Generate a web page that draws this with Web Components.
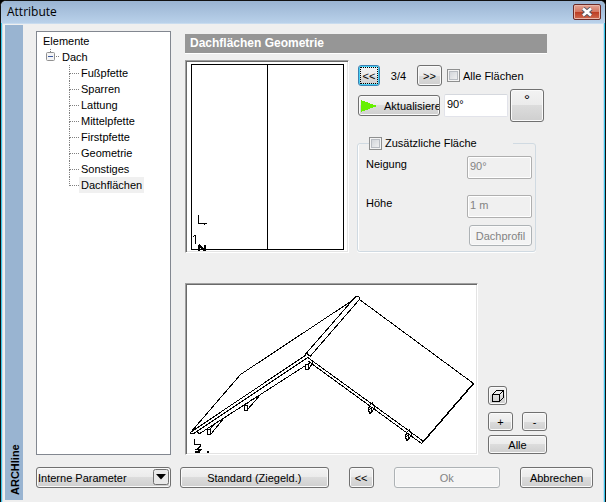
<!DOCTYPE html>
<html lang="de">
<head>
<meta charset="utf-8">
<title>Attribute</title>
<style>
html, body { margin: 0; min-height: 100vh; background: #000; }
body { display: flex; font: 11px/16px "Liberation Sans", Arial, sans-serif; color: #000; }
</style>
</head>
<body>
<attribute-dialog></attribute-dialog>
<script>
function define(name, html, setup) {
  customElements.define(name, class extends HTMLElement {
    constructor() {
      super();
      const root = this.attachShadow({ mode: "open" });
      const t = document.createElement("template");
      t.innerHTML = "<style>*{box-sizing:border-box}button,input,select{font:inherit;color:inherit;margin:0}</style>" + html;
      root.append(t.content.cloneNode(true));
    }
    connectedCallback() { if (setup) setup(this, this.shadowRoot); }
  });
}

define("push-button", `
<style>
:host { display: block; height: 21px; }
button { width: 100%; height: 100%; padding: 0; border: 1px solid #707070; border-radius: 3px; overflow: hidden; white-space: nowrap;
  display: flex; align-items: center; justify-content: center; gap: 7px;
  background: linear-gradient(#f3f3f3, #ebebeb 50%, #dcdcdc 50%, #cfcfcf); box-shadow: inset 0 0 0 1px #fafafa; }
:host([start]) button { justify-content: flex-start; padding-left: 2px; }
:host([top]) button { align-items: flex-start; }
:host([focused]) button { border-color: #3c7fb1; box-shadow: inset 0 0 0 1px #46d0f4; outline: 1px dotted #000; outline-offset: -3px; }
button:disabled { color: #838383; border-color: #adb2b5; background: #f4f4f4; }
</style>
<button type="button"><slot></slot></button>`, (el, root) => {
  const b = root.querySelector("button");
  b.disabled = el.hasAttribute("disabled");
  if (el.hasAttribute("label")) b.setAttribute("aria-label", el.getAttribute("label"));
});

define("text-field", `
<style>
:host { display: grid; grid-template-columns: 1fr 65px; align-items: start; }
:host([bare]) { display: block; }
:host([bare]) label { display: none; }
input { width: 100%; height: 23px; padding: 0 2px 4px; border: 1px solid #e2e3ea; border-top-color: #abadb3; border-radius: 2px; background: #fff; }
:host([bare]) input { border-top-color: #d5d8de; }
input:disabled { color: #838383; background: #f0f0f0; border-color: #afafaf; box-shadow: inset 0 0 0 1px #fff; }
</style>
<label for="f"></label><input id="f" type="text">`, (el, root) => {
  const i = root.querySelector("input");
  i.value = el.getAttribute("value");
  i.disabled = el.hasAttribute("disabled");
  if (el.hasAttribute("bare")) i.setAttribute("aria-label", el.getAttribute("label"));
  else root.querySelector("label").textContent = el.getAttribute("label");
});

define("check-box", `
<style>
:host { display: block; }
label { display: flex; align-items: center; gap: 3px; white-space: nowrap; }
input { appearance: none; width: 13px; height: 13px; border: 1px solid #8e8f8f;
  background: linear-gradient(135deg, #cbcfd5, #f6f6f6); box-shadow: inset 0 0 0 1px #f4f4f4, inset 0 0 0 2px #b8bcc2; }
input:checked { background: #4b6ea5; }
</style>
<label><input type="checkbox"><slot></slot></label>`);

define("drop-down", `
<style>
:host { display: block; position: relative; height: 21px; }
select { appearance: none; width: 100%; height: 100%; padding: 0 20px 0 1px; border: 1px solid #707070; border-radius: 3px;
  background: linear-gradient(#f3f3f3, #ebebeb 50%, #dcdcdc 50%, #cfcfcf); box-shadow: inset 0 0 0 1px #fafafa; }
svg { position: absolute; right: 2px; top: 2px; pointer-events: none; }
</style>
<select aria-label="Parameter"><option>Interne Parameter</option></select>
<svg width="16" height="16"><rect x=".5" y=".5" width="15" height="15" rx="2" fill="#e9e9e9" stroke="#707070"/><path d="M3 5h10L8 10.500z"/></svg>`);

define("element-tree", `
<style>
:host { display: block; background: #fff; border: 1px solid #828790; padding: 1px 0 0 6px; }
ul { list-style: none; margin: 0; padding: 0; }
.root { padding-left: 19px; position: relative; }
.root::before { content: ""; position: absolute; left: 7px; top: 0; height: 3px; border-left: 1px dotted #808080; }
.box { position: absolute; left: 3px; top: 3px; }
.kids { padding-left: 7px; }
.kids li { display: grid; grid-template-columns: 10px max-content; height: 16px; position: relative; }
.kids li::before { content: ""; height: 8px; border-left: 1px dotted #808080; border-bottom: 1px dotted #808080; }
.kids li:not(:last-child)::after { content: ""; position: absolute; left: 0; top: 8px; height: 8px; border-left: 1px dotted #808080; }
span { padding: 0 2px; }
.sel { background: #f0f0f0; }
</style>
<div>Elemente</div>
<div class="root">
<svg class="box" width="14" height="9"><rect x=".5" y=".5" width="8" height="8" rx="1" fill="#f4f4f4" stroke="#919191"/><path d="M2 4.500h5" stroke="#3c5aa0"/><path d="M10 4.500h1m1 0h1" stroke="#808080"/></svg>
Dach
<ul class="kids">
<li><span>Fußpfette</span></li><li><span>Sparren</span></li><li><span>Lattung</span></li><li><span>Mittelpfette</span></li><li><span>Firstpfette</span></li><li><span>Geometrie</span></li><li><span>Sonstiges</span></li><li><span class="sel">Dachflächen</span></li>
</ul></div>`);

define("sunken-view", `
<style>
:host { display: flex; background: #fff; border: 1px solid; border-color: #a0a0a0 #fff #fff #a0a0a0;
  box-shadow: inset 1px 1px #696969, inset -1px -1px #e3e3e3; min-width: 0; overflow: hidden; padding: 1px; }
::slotted(svg) { width: 100%; height: 100%; }
</style><slot></slot>`);

define("title-bar", `
<style>
:host { display: flex; height: 22px; align-items: center; justify-content: space-between; padding: 0 4px 0 6px;
  background: linear-gradient(#9ab4d2, #b9d1ea); font: 12px/20px "Open Sans", "Noto Sans", sans-serif; }
button { width: 28px; height: 16px; padding: 0; border: 1px solid #6b2a26; border-radius: 2px; display: grid; place-items: center;
  background: linear-gradient(#e5a493, #d3745f 50%, #bc3a20 50%, #cf6a50); box-shadow: inset 0 0 0 1px #e9b6a8; }
</style>
<slot></slot>
<button type="button" aria-label="Schließen"><svg width="14" height="10" viewBox="0 0 14 10"><path d="M3 1.500 11 8.500M11 1.500 3 8.500" stroke="#555a68" stroke-width="4.500"/><path d="M3 1.500 11 8.500M11 1.500 3 8.500" stroke="#fff" stroke-width="2.600"/></svg></button>`);

define("extra-area", `
<style>
:host { display: block; }
fieldset { margin: 0; border: 1px solid #d0dae2; border-radius: 3px; padding: 5px 3px 5px 8px; box-shadow: inset 1px 0 #fff, 0 1px #fff; display: grid; gap: 16px; }
legend { padding: 0 36px 0 0; margin-left: 3px; }
push-button { width: 63px; justify-self: end; margin-top: -9px; }
</style>
<fieldset><legend><check-box>Zusätzliche Fläche</check-box></legend>
<text-field label="Neigung" value="90°" disabled></text-field>
<text-field label="Höhe" value="1 m" disabled></text-field>
<push-button disabled>Dachprofil</push-button></fieldset>`);

define("geometry-panel", `
<style>
:host { display: flex; flex-direction: column; min-width: 0; padding: 3px 46px 0 0; }
h1 { margin: 0 0 7px; padding: 0 5px; font-size: 12px; line-height: 19px; color: #fff; background: #969696; box-shadow: 0 1px #fff; }
.top { display: grid; grid-template-columns: 1fr 190px; gap: 8px; height: 193px; }
.side { padding-top: 5px; }
.nav { display: grid; grid-template-columns: 22px 37px 25px 1fr; align-items: center; margin-left: 1px; }
.nav span { text-align: center; }
.nav check-box { margin-left: 5px; }
.act { display: grid; grid-template-columns: 82px 66px 34px; column-gap: 2px; align-items: center; margin: 3px 0 13px 1px; }
.act text-field { margin-left: 2px; }
.act push-button:last-child { height: 33px; }
.fields { padding-right: 11px; }
.low { flex: 1; display: grid; grid-template-columns: 1fr 59px; gap: 10px; margin-top: 30px; min-height: 150px; }
.zoom { display: grid; grid-template-columns: 25px 25px; justify-content: space-between; align-content: end; row-gap: 4px; padding-bottom: 1px; }
.zoom push-button { height: 19px; }
.zoom .cube { width: 19px; margin-bottom: 3px; grid-column: 1 / -1; }
.all { grid-column: 1 / -1; }
svg { shape-rendering: crispEdges; fill: none; stroke: #000; }
.solid { fill: #66f000; stroke: none; }
</style>
<h1>Dachflächen Geometrie</h1>
<div class="top">
<sunken-view><svg viewBox="187 62 160 189" preserveAspectRatio="xMinYMin"><path d="M191.500 64.500h152v185h-152zM267.500 65v184M197.500 216.500l1-1v8h8m-2-1v2M193.500 236.500l1.500-1v8"/><path d="M199 251v-6M205 251v-6M199 245l6 6" stroke-width="2"/></svg></sunken-view>
<div class="side">
<div class="nav"><push-button focused>&lt;&lt;</push-button><span>3/4</span><push-button>&gt;&gt;</push-button><check-box>Alle Flächen</check-box></div>
<div class="act"><push-button start><svg width="16" height="12" style="flex:none"><path class="solid" d="M0 0v12L16 6z"/></svg>Aktualisieren</push-button><text-field bare label="Winkel" value="90°"></text-field><push-button top label="Grad"><span style="font-size:15px;line-height:20px">°</span></push-button></div>
<div class="fields"><extra-area></extra-area></div>
</div></div>
<div class="low">
<sunken-view><svg viewBox="187 285 289 168" preserveAspectRatio="xMinYMin">
<path d="M191 432 240.500 374.500 353 300M191 432 306 355M193 434 307 358M199 434 311 362M190.500 432v2l3-.5M197 431l2 3"/>
<path d="M306 353.500 354.500 298M310 356.500 359 300M354 299l2-3h2l1 1v3M304 356l2.500-3 3 3M359.500 299.500 473.500 383.500M307 357 423 441M308 361 421.500 443.500l2-2"/>
<path d="M473.500 383.500 423 442" stroke-width="1.500"/>
<path d="M207.500 429.500h3v5h-3zM210 429l5-5M211 434l13-16M244.500 405.500h3v5h-3zM247 404l5-5M248 409l13-15M305.500 364.500h3v5h-3zM309 369l4-7M368.500 409.500l1-4 3-3M368.500 409.500l1 4 2-1v-4zM372 412l3-5-3-4M405.500 436.500l1-4 3-3M405.500 436.500l1 4 2-1v-4zM409 439l3-5-3-4"/>
<path d="M194.500 439v5.500h6v2l-4 3h4l-3 3M195 452h5M207 452h2" stroke-width="1.500"/>
</svg></sunken-view>
<div class="zoom"><push-button class="cube" label="Ansicht"><svg width="14" height="14" style="flex:none"><path d="M1.500 5.500h7v7h-7zM1.500 5.500l4-4h7l-4 4M12.500 1.500v7l-4 4"/></svg></push-button>
<push-button>+</push-button><push-button>-</push-button><push-button class="all">Alle</push-button></div>
</div>`);

define("attribute-dialog", `
<style>
:host { flex: 1; min-width: 0; display: flex; flex-direction: column; border: 1px solid #111; border-radius: 6px 6px 0 0; overflow: hidden; background: #efefef; }
.body { flex: 1; display: grid; grid-template-columns: 18px minmax(0, 1fr); column-gap: 13px; border: 1px solid #38c6e8; border-top: 0; box-shadow: inset 0 0 0 1px #c9dcef; padding: 2px 11px 3px 3px; }
aside { background: #99b4d1; writing-mode: vertical-rl; transform: rotate(180deg); font-weight: bold; line-height: 16px; padding: 5px 2px 0 0; }
main { display: grid; grid-template-columns: 135px minmax(0, 1fr); grid-template-rows: 1fr 21px; gap: 12px 14px; padding: 6px 0 12px; }
footer { grid-column: 1 / -1; display: grid; grid-template-columns: 135px 137fr 25px 106fr 73px; column-gap: 20px; }
footer push-button:nth-child(2) { margin-left: -11px; }
</style>
<title-bar>Attribute</title-bar>
<div class="body"><aside>ARCHline</aside>
<main><element-tree></element-tree><geometry-panel></geometry-panel>
<footer><drop-down></drop-down><push-button>Standard (Ziegeld.)</push-button><push-button>&lt;&lt;</push-button><push-button disabled>Ok</push-button><push-button>Abbrechen</push-button></footer></main></div>`);
</script>
</body>
</html>
